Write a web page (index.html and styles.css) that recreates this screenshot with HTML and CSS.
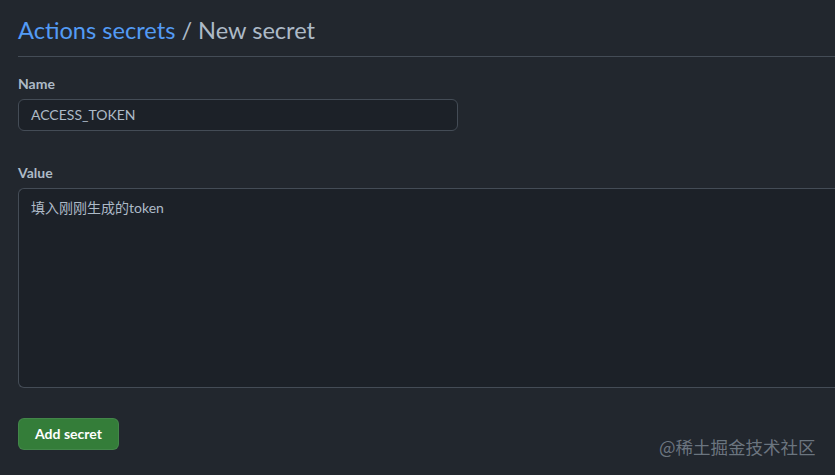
FILE: index.html
```html
<!DOCTYPE html>
<html lang="zh">
<head>
<meta charset="utf-8">
<link rel="stylesheet" href="styles.css">
</head>
<body>
<div class="page">
  <div class="subhead">
    <h2 class="subhead-heading"><a class="crumb" href="#">Actions secrets</a> / New secret</h2>
  </div>
  <form class="form">
    <div class="group">
      <label class="label">Name</label>
      <div class="input">ACCESS_TOKEN</div>
    </div>
    <div class="group value-group">
      <label class="label">Value</label>
      <div class="textarea">填入刚刚生成的token</div>
    </div>
    <div class="actions">
      <button type="button" class="btn">Add secret</button>
    </div>
  </form>
</div>
<div class="watermark">@稀土掘金技术社区</div>
</body>
</html>
```
FILE: styles.css
```css
html, body {
  margin: 0;
  padding: 0;
  background: #22272e;
  width: 835px;
  height: 475px;
  overflow: hidden;
  font-family: "Segoe UI", Lato, "Noto Sans CJK SC", sans-serif;
  color: #adbac7;
}
.page {
  padding-left: 18px;
}
.subhead {
  border-bottom: 1px solid #444c56;
  padding-top: 13px;
  padding-bottom: 8px;
}
.subhead-heading {
  margin: 0;
  font-size: 23.6px;
  font-weight: 400;
  line-height: 35px;
  color: #adbac7;
}
.crumb {
  color: #539bf5;
  text-decoration: none;
}
.form {
  padding-top: 16px;
}
.group {
  display: flex;
  flex-direction: column;
}
.label {
  font-size: 14px;
  font-weight: 700;
  line-height: 22px;
  margin-bottom: 4px;
  color: #adbac7;
}
.input {
  box-sizing: border-box;
  width: 440px;
  height: 32px;
  border: 1px solid #444c56;
  border-radius: 6px;
  background: #1c2128;
  padding: 0 12px;
  font-size: 14px;
  line-height: 30px;
  color: #adbac7;
}
.value-group {
  margin-top: 31px;
}
.textarea {
  box-sizing: border-box;
  height: 200px;
  border: 1px solid #444c56;
  border-right: none;
  border-radius: 6px 0 0 6px;
  background: #1c2128;
  padding: 9px 12px;
  font-size: 14px;
  line-height: 20px;
  color: #adbac7;
}
.actions {
  margin-top: 30px;
}
.btn {
  box-sizing: border-box;
  height: 32px;
  width: 101px;
  padding: 0;
  white-space: nowrap;
  border: 1px solid rgba(205, 217, 229, 0.1);
  border-radius: 6px;
  background: #347d39;
  color: #ffffff;
  font-family: inherit;
  font-size: 14px;
  font-weight: 700;
  line-height: 20px;
}
.watermark {
  position: absolute;
  left: 659px;
  top: 436px;
  font-size: 17.5px;
  line-height: 22px;
  color: rgba(173, 186, 199, 0.55);
  font-family: "Noto Sans CJK SC", sans-serif;
}
```
